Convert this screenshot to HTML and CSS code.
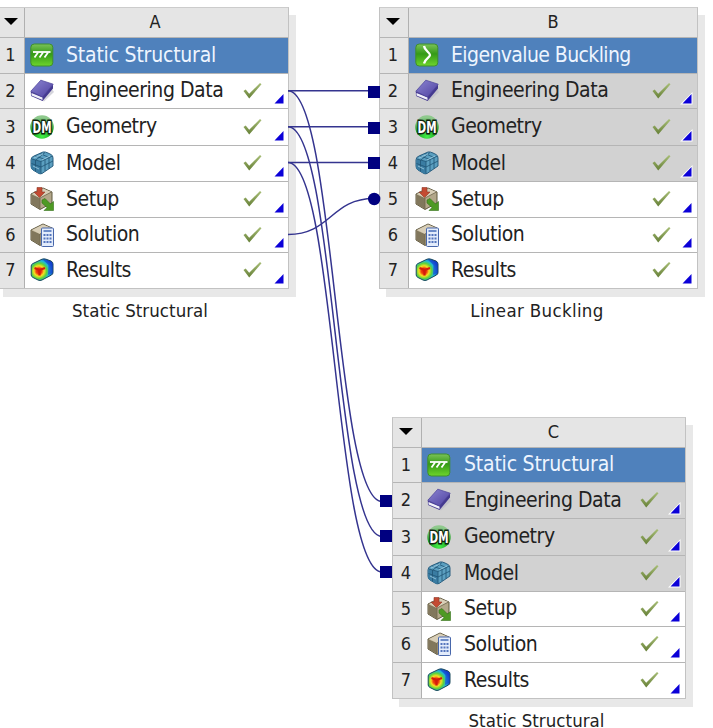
FILE: index.html
```html
<!DOCTYPE html>
<html lang="en">

<head>
    <meta charset="UTF-8">
    <meta name="viewport" content="width=device-width, initial-scale=1.0">
    <title>Project Schematic</title>
    <link rel="stylesheet" href="styles.css">
</head>

<body>
    <!-- Icons -->
    <svg class="icon-defs" width="0" height="0">
        <defs>
            <linearGradient id="green" x1="0" y1="0" x2="0" y2="1">
                <stop offset="0" stop-color="#7cc35a"/>
                <stop offset="0.45" stop-color="#349a16"/>
                <stop offset="1" stop-color="#6ed52c"/>
            </linearGradient>
            <radialGradient id="dm-green" cx="0.5" cy="0.9" r="0.8">
                <stop offset="0" stop-color="#45f04a"/>
                <stop offset="0.6" stop-color="#159a1c"/>
                <stop offset="1" stop-color="#8fc98d"/>
            </radialGradient>
            <linearGradient id="purple" x1="0" y1="0" x2="1" y2="1">
                <stop offset="0" stop-color="#8c86d2"/>
                <stop offset="1" stop-color="#4d3f9f"/>
            </linearGradient>
            <linearGradient id="olive" x1="0" y1="0" x2="0" y2="1">
                <stop offset="0" stop-color="#a9bf78"/>
                <stop offset="1" stop-color="#657f36"/>
            </linearGradient>
            <radialGradient id="heat" gradientUnits="userSpaceOnUse" cx="9" cy="13" r="14">
                <stop offset="0" stop-color="#e01808"/>
                <stop offset="0.2" stop-color="#f04010"/>
                <stop offset="0.36" stop-color="#f8e020"/>
                <stop offset="0.55" stop-color="#5cd23c"/>
                <stop offset="0.74" stop-color="#1fb8dc"/>
                <stop offset="1" stop-color="#1038c8"/>
            </radialGradient>
            <symbol id="static" viewBox="0 0 24 24">
                <rect x="0.8" y="1" width="22" height="22" rx="3.5" fill="url(#green)" stroke="#3f8f2c"/>
                <path d="M3 9H20.500" stroke="#fff" stroke-width="1.8"/>
                <path d="M8 9.500L4.500 14.500M13 9.500L9.500 14.500M18 9.500L14.500 14.500" stroke="#fff" stroke-width="1.8"/>
            </symbol>
            <symbol id="buckling" viewBox="0 0 24 24">
                <rect x="0.8" y="1" width="22" height="22" rx="3.5" fill="url(#green)" stroke="#3f8f2c"/>
                <path d="M9 3C9.500 7.500 15 9.500 15 12S9.500 16 9 20.500" fill="none" stroke="#fff" stroke-width="2.3"/>
            </symbol>
            <symbol id="book" viewBox="0 0 24 24">
                <path d="M1 14L14 22.500L24 13L22 10Z" fill="#b9b9c4" opacity="0.6"/>
                <path d="M0.800 12.500L1 17L12.500 22L23 9.500V5.500L12 16Z" fill="#453a90"/>
                <path d="M1.500 14L12.500 18.500V21L1.500 16.500Z" fill="#f1f1fa"/>
                <path d="M0.800 12.300L10.800 1.200L23.200 5.200L12.500 18Z" fill="url(#purple)" stroke="#51489d" stroke-width="0.8"/>
            </symbol>
            <symbol id="dm" viewBox="0 0 24 24">
                <circle cx="12" cy="12" r="11.8" fill="url(#dm-green)"/>
                <text x="12" y="18" class="dm-text" text-anchor="middle" textLength="19" lengthAdjust="spacingAndGlyphs">DM</text>
            </symbol>
            <symbol id="model" viewBox="0 0 24 24">
                <path d="M1 9Q1 6 4 5L13 1Q15 0.500 18 2L21 3.500Q23 4.500 23 7V15L12 22.500Q10 23.500 8 22L3 19Q1 18 1 15Z" fill="#5b9fc0" stroke="#2b5f80"/>
                <path d="M2 8L11 10.500V22.500Q10 23 8 22L3 19Q1 18 1 15Z" fill="#3a7ca2"/>
                <path d="M2 8L11 10.500L22.500 5M11 10.500V22.500M1.500 12.500L11 16L23 10M5 4.800L15 8.500V20M10 2.500L19 6.500V17.500M5.500 9V20.500M15 1.500L6 9" fill="none" stroke="#1f5475" stroke-width="0.8"/>
                <path d="M4 7L13 3M12 9L20 5M3 15L9 18" stroke="#a3d1e4" stroke-width="0.8"/>
            </symbol>
            <symbol id="block" viewBox="0 0 24 24">
                <path d="M1 7L13 1L22 5V16L10 22.500L1 17Z" fill="#b3a78a" stroke="#5f583f"/>
                <path d="M1.500 7.500L10 11V22L1.500 17Z" fill="#81775c"/>
                <path d="M2 7L13 1.500L21.500 5L10 11Z" fill="#d8ceb7"/>
                <path d="M10 11V22M10 11L21.500 5" stroke="#6f664c" stroke-width="0.8"/>
            </symbol>
            <symbol id="setup" viewBox="0 0 24 24">
                <use href="#block"/>
                <path d="M7 0.500H12V5H15L9.500 10.500L4 5H7Z" fill="#c44a32" stroke="#8d3525" stroke-width="0.6"/>
                <path d="M12 13L15 11.500L20.500 17L23.500 14.500V23.500H14L17 20.500L12 16Z" fill="#4e9a24" stroke="#34701a" stroke-width="0.6"/>
            </symbol>
            <symbol id="solution" viewBox="0 0 24 24">
                <use href="#block"/>
                <rect x="11.500" y="5" width="12" height="18.500" rx="1" fill="#e3ecfb" stroke="#4867ab"/>
                <path d="M13.500 8H21.500" stroke="#6d8cc8" stroke-width="2"/>
                <path d="M13.500 12H21.500M13.500 15.500H21.500M13.500 19H21.500" stroke="#5475bc" stroke-width="2" stroke-dasharray="2 1"/>
            </symbol>
            <symbol id="results" viewBox="0 0 24 24">
                <path d="M1.200 8Q1 6.500 3 5.500L12 1.200Q14 0.500 16 1.200L21 3Q23 4 23 6V14.500Q23 16 21.500 17L12 22Q10 23 8 22L3 19.500Q1.200 18.500 1.200 17Z" fill="url(#heat)" stroke="#1a4a5c"/>
                <path d="M13 1.500L20.500 3.500Q22.500 4.500 22.500 6V14.500L18 17L18.500 7Z" fill="#1747cf" opacity="0.65"/>
                <path d="M4.500 10L9.500 12L15 10M9.500 12V17.500" fill="none" stroke="#d21c0c" stroke-width="2.2"/>
            </symbol>
            <symbol id="check" viewBox="0 0 19 18">
                <path d="M0.500 9L2.700 7.500L6.200 11.800L17 1L18.500 2.300L6.200 16.500Z" fill="url(#olive)"/>
            </symbol>
            <symbol id="corner" viewBox="0 0 13 13">
                <path class="corner-edge" d="M0 12.500L12.500 0V12.500Z"/>
                <path d="M2.500 11.500L11.500 2V11.500Z" fill="#0b00d8"/>
            </symbol>
        </defs>
    </svg>

    <div class="schematic">
        <!-- System A -->
        <div class="system system-a">
            <div class="grid">
                <div class="num"><span class="arrow"></span></div>
                <div class="letter">A</div>
                <div class="num">1</div>
                <div class="cell title"><svg class="icon"><use href="#static"/></svg><span>Static Structural</span></div>
                <div class="num">2</div>
                <div class="cell"><svg class="icon"><use href="#book"/></svg><span>Engineering Data</span><svg class="check"><use href="#check"/></svg><svg class="corner"><use href="#corner"/></svg></div>
                <div class="num">3</div>
                <div class="cell"><svg class="icon"><use href="#dm"/></svg><span>Geometry</span><svg class="check"><use href="#check"/></svg><svg class="corner"><use href="#corner"/></svg></div>
                <div class="num">4</div>
                <div class="cell"><svg class="icon"><use href="#model"/></svg><span>Model</span><svg class="check"><use href="#check"/></svg><svg class="corner"><use href="#corner"/></svg></div>
                <div class="num">5</div>
                <div class="cell"><svg class="icon"><use href="#setup"/></svg><span>Setup</span><svg class="check"><use href="#check"/></svg><svg class="corner"><use href="#corner"/></svg></div>
                <div class="num">6</div>
                <div class="cell"><svg class="icon"><use href="#solution"/></svg><span>Solution</span><svg class="check"><use href="#check"/></svg><svg class="corner"><use href="#corner"/></svg></div>
                <div class="num">7</div>
                <div class="cell"><svg class="icon"><use href="#results"/></svg><span>Results</span><svg class="check"><use href="#check"/></svg><svg class="corner"><use href="#corner"/></svg></div>
            </div>
            <div class="caption">Static Structural</div>
        </div>

        <!-- System B -->
        <div class="system system-b">
            <div class="grid">
                <div class="num"><span class="arrow"></span></div>
                <div class="letter">B</div>
                <div class="num">1</div>
                <div class="cell title"><svg class="icon"><use href="#buckling"/></svg><span>Eigenvalue Buckling</span></div>
                <div class="num">2</div>
                <div class="cell shared"><svg class="icon"><use href="#book"/></svg><span>Engineering Data</span><svg class="check"><use href="#check"/></svg><svg class="corner"><use href="#corner"/></svg></div>
                <div class="num">3</div>
                <div class="cell shared"><svg class="icon"><use href="#dm"/></svg><span>Geometry</span><svg class="check"><use href="#check"/></svg><svg class="corner"><use href="#corner"/></svg></div>
                <div class="num">4</div>
                <div class="cell shared"><svg class="icon"><use href="#model"/></svg><span>Model</span><svg class="check"><use href="#check"/></svg><svg class="corner"><use href="#corner"/></svg></div>
                <div class="num">5</div>
                <div class="cell"><svg class="icon"><use href="#setup"/></svg><span>Setup</span><svg class="check"><use href="#check"/></svg><svg class="corner"><use href="#corner"/></svg></div>
                <div class="num">6</div>
                <div class="cell"><svg class="icon"><use href="#solution"/></svg><span>Solution</span><svg class="check"><use href="#check"/></svg><svg class="corner"><use href="#corner"/></svg></div>
                <div class="num">7</div>
                <div class="cell"><svg class="icon"><use href="#results"/></svg><span>Results</span><svg class="check"><use href="#check"/></svg><svg class="corner"><use href="#corner"/></svg></div>
            </div>
            <div class="caption">Linear Buckling</div>
        </div>

        <!-- System C -->
        <div class="system system-c">
            <div class="grid">
                <div class="num"><span class="arrow"></span></div>
                <div class="letter">C</div>
                <div class="num">1</div>
                <div class="cell title"><svg class="icon"><use href="#static"/></svg><span>Static Structural</span></div>
                <div class="num">2</div>
                <div class="cell shared"><svg class="icon"><use href="#book"/></svg><span>Engineering Data</span><svg class="check"><use href="#check"/></svg><svg class="corner"><use href="#corner"/></svg></div>
                <div class="num">3</div>
                <div class="cell shared"><svg class="icon"><use href="#dm"/></svg><span>Geometry</span><svg class="check"><use href="#check"/></svg><svg class="corner"><use href="#corner"/></svg></div>
                <div class="num">4</div>
                <div class="cell shared"><svg class="icon"><use href="#model"/></svg><span>Model</span><svg class="check"><use href="#check"/></svg><svg class="corner"><use href="#corner"/></svg></div>
                <div class="num">5</div>
                <div class="cell"><svg class="icon"><use href="#setup"/></svg><span>Setup</span><svg class="check"><use href="#check"/></svg><svg class="corner"><use href="#corner"/></svg></div>
                <div class="num">6</div>
                <div class="cell"><svg class="icon"><use href="#solution"/></svg><span>Solution</span><svg class="check"><use href="#check"/></svg><svg class="corner"><use href="#corner"/></svg></div>
                <div class="num">7</div>
                <div class="cell"><svg class="icon"><use href="#results"/></svg><span>Results</span><svg class="check"><use href="#check"/></svg><svg class="corner"><use href="#corner"/></svg></div>
            </div>
            <div class="caption">Static Structural</div>
        </div>

        <!-- Links between systems -->
        <svg class="links" width="713" height="728" viewBox="0 0 713 728">
            <g class="wires">
                <path d="M288 90.700H370"/>
                <path d="M288 126.700H370"/>
                <path d="M288 162.500H370"/>
                <path d="M288 234.500C331 234.500 331 198.500 374 198.500"/>
                <path d="M288 90.700C335 90.700 335 501.500 382 501.500"/>
                <path d="M288 126.700C335 126.700 335 536.500 382 536.500"/>
                <path d="M288 162.500C335 162.500 335 572 382 572"/>
            </g>
            <g class="ports">
                <rect x="368" y="86" width="12" height="12"/>
                <rect x="368" y="122" width="12" height="12"/>
                <rect x="368" y="157" width="12" height="12"/>
                <circle cx="374.200" cy="199" r="6.200"/>
                <rect x="380" y="495" width="12" height="12"/>
                <rect x="380" y="530" width="12" height="12"/>
                <rect x="380" y="566" width="12" height="12"/>
            </g>
        </svg>
    </div>
</body>

</html>
```
FILE: styles.css
```css
body {
    font-family: "DejaVu Sans Condensed", "DejaVu Sans", sans-serif;
    font-stretch: condensed;
    margin: 0;
    background-color: #fff;
    color: #222;
    overflow: hidden;
}

.icon-defs {
    position: absolute;
}

.schematic {
    position: relative;
    width: 713px;
    height: 728px;
    overflow: hidden;
}

.system {
    position: absolute;
}

.system-a {
    left: -4px;
    top: 7px;
    width: 293px;
}

.system-b {
    left: 379px;
    top: 7px;
    width: 319px;
}

.system-c {
    left: 392px;
    top: 417px;
    width: 294px;
}

.grid {
    display: grid;
    grid-template-columns: 29px 1fr;
    grid-template-rows: 30px 36px 35px 37px 36px 36px 35px 35px;
    border: 1px solid #c2c2c2;
    border-top-color: #ccc;
    box-sizing: border-box;
    height: 282px;
    background-color: #fff;
    box-shadow: 7px 8px 0 #e8e8e8;
}

.system-a .grid {
    grid-template-columns: 28px 1fr;
}

.system-c .grid {
    grid-template-rows: 30px 35px 36px 37px 36px 35px 36px 35px;
}

.num,
.letter {
    display: flex;
    align-items: center;
    justify-content: center;
    background-color: #e5e5e5;
    font-size: 18px;
    box-sizing: border-box;
    border-bottom: 1px solid #b5b5b5;
    padding-bottom: 2px;
}

.num {
    border-right: 1px solid #b0b0b0;
    padding-right: 2px;
}

.system-a .letter {
    padding-right: 3px;
}

.system-a .num {
    padding-right: 0;
}

.cell {
    display: flex;
    align-items: center;
    position: relative;
    box-sizing: border-box;
    padding-left: 5px;
    padding-bottom: 1px;
    border-bottom: 1px solid #b5b5b5;
    font-size: 21px;
    letter-spacing: -0.45px;
    white-space: nowrap;
}

.cell span {
    padding-bottom: 1px;
}

.num:nth-last-child(2),
.cell:last-child {
    border-bottom: none;
}

.title {
    background-color: #4f81bc;
    color: #eef5ff;
    letter-spacing: -0.2px;
}

.system-b .title {
    letter-spacing: -0.6px;
}

.shared {
    background-color: #d2d2d2;
}

.icon {
    width: 24px;
    height: 24px;
    margin-right: 12px;
    flex: none;
}

.system-b .cell {
    padding-left: 6px;
}

.system-c .icon {
    margin-right: 13px;
}

.dm-text {
    font-family: "DejaVu Sans Condensed", sans-serif;
    font-size: 16px;
    font-weight: bold;
    fill: #fff;
    stroke: #10240f;
    stroke-width: 3px;
    paint-order: stroke;
    letter-spacing: 0;
}

.check {
    width: 19px;
    height: 18px;
    margin-left: auto;
    margin-right: 26px;
}

.corner {
    position: absolute;
    right: 4px;
    bottom: 3px;
    width: 13px;
    height: 13px;
}

.system-a .corner {
    right: 3px;
}

.corner-edge {
    fill: #fff;
}

.arrow {
    border-left: 7px solid transparent;
    border-right: 7px solid transparent;
    border-top: 7px solid #000;
}

.caption {
    margin-top: 11px;
    text-align: center;
    font-size: 18.5px;
    line-height: 22px;
    letter-spacing: 0.05px;
    padding-right: 5px;
}

.system-b .caption {
    letter-spacing: 0.35px;
    padding-right: 3px;
}

.links {
    position: absolute;
    left: 0;
    top: 0;
}

.wires {
    fill: none;
    stroke: #34348f;
    stroke-width: 1.5px;
}

.ports {
    fill: #000080;
}
```
